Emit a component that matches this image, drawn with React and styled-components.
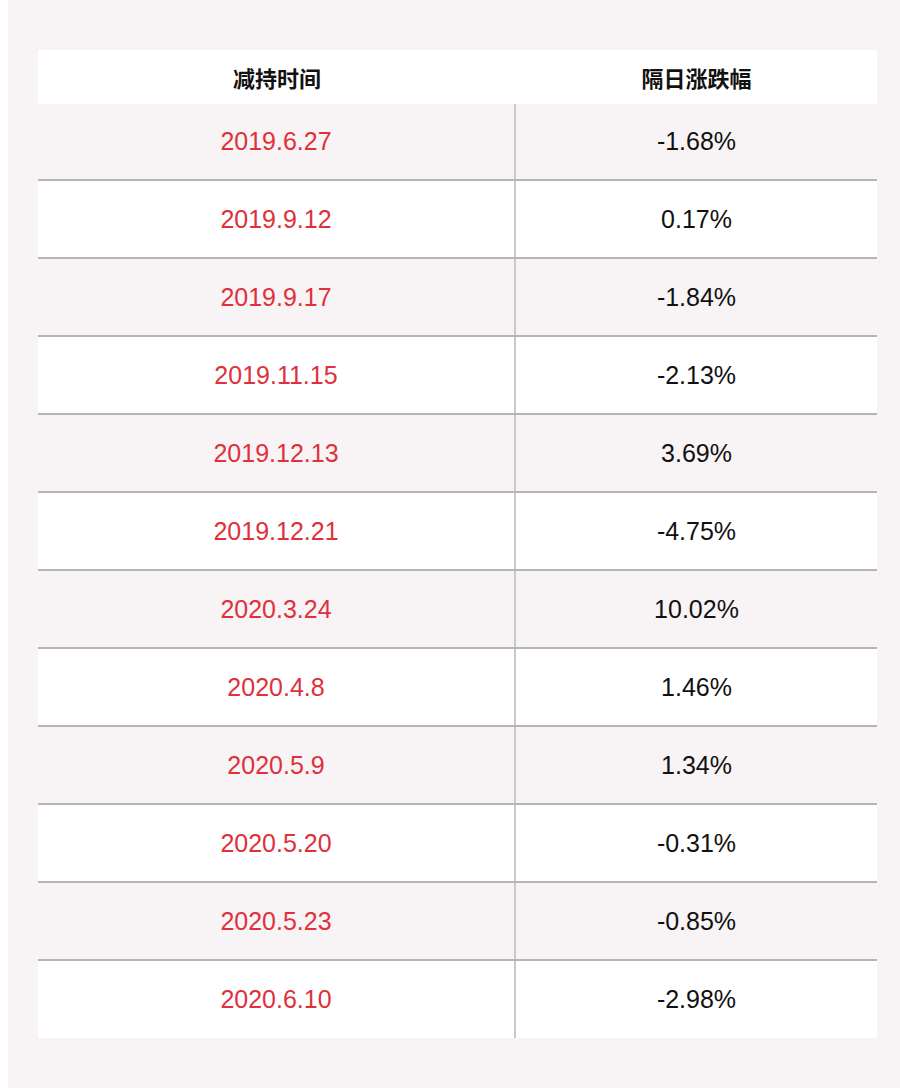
import styled, { createGlobalStyle } from "styled-components";

const rows = [
  ["2019.6.27", "-1.68%"],
  ["2019.9.12", "0.17%"],
  ["2019.9.17", "-1.84%"],
  ["2019.11.15", "-2.13%"],
  ["2019.12.13", "3.69%"],
  ["2019.12.21", "-4.75%"],
  ["2020.3.24", "10.02%"],
  ["2020.4.8", "1.46%"],
  ["2020.5.9", "1.34%"],
  ["2020.5.20", "-0.31%"],
  ["2020.5.23", "-0.85%"],
  ["2020.6.10", "-2.98%"],
];

export default function App() {
  return (
    <>
      <GlobalStyle />
      <Panel>
        <Table>
          <Header>
            <HeadCell>减持时间</HeadCell>
            <HeadCell>隔日涨跌幅</HeadCell>
          </Header>
          {rows.map(([date, change], i) => (
            <Row key={date} $shaded={i % 2 === 0}>
              <DateCell>{date}</DateCell>
              <ChangeCell>{change}</ChangeCell>
            </Row>
          ))}
        </Table>
      </Panel>
    </>
  );
}

const GlobalStyle = createGlobalStyle`
  body {
    margin: 0;
    background: #ffffff;
    font-family: "Liberation Sans", "Noto Sans CJK SC", sans-serif;
  }
`;

const Panel = styled.div`
  margin-left: 8px;
  width: 892px;
  height: 1088px;
  box-sizing: border-box;
  padding: 50px 23px 0 30px;
  background: #f8f4f5;
`;

const Table = styled.div`
  display: flex;
  flex-direction: column;
  width: 839px;
`;

const Header = styled.div`
  display: grid;
  grid-template-columns: 476px 1fr;
  height: 54px;
  background: #ffffff;
`;

const HeadCell = styled.div`
  display: flex;
  align-items: center;
  justify-content: center;
  padding-left: 2px;
  font-family: "Noto Sans CJK SC", sans-serif;
  font-size: 22px;
  font-weight: 700;
  color: #111111;
`;

const Row = styled.div`
  display: grid;
  grid-template-columns: 476px 2px 1fr;
  height: 76px;
  background: ${(p) => (p.$shaded ? "#f8f4f5" : "#ffffff")};
  border-bottom: 2px solid #b5b5b5;
  &:nth-child(2) {
    height: 75px;
  }
  &:last-child {
    height: 77px;
    border-bottom: none;
  }
  &::after {
    content: "";
    grid-column: 2;
    grid-row: 1;
    background: #c9c9c9;
  }
`;

const Cell = styled.div`
  grid-row: 1;
  display: flex;
  align-items: center;
  justify-content: center;
  font-size: 25px;
`;

const DateCell = styled(Cell)`
  grid-column: 1;
  color: #e0303b;
`;

const ChangeCell = styled(Cell)`
  grid-column: 3;
  color: #111111;
`;
